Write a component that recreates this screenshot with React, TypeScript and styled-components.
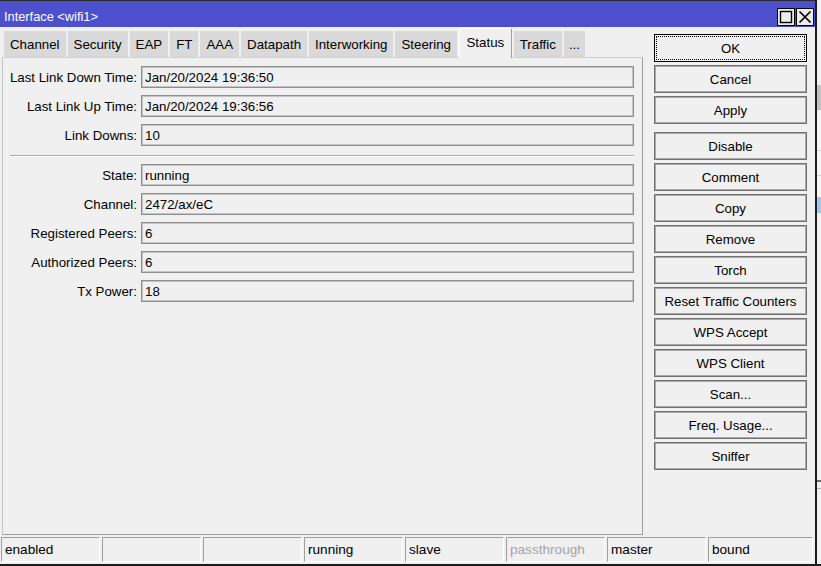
import React from "react";
import styled, { createGlobalStyle } from "styled-components";

const GlobalStyle = createGlobalStyle`
  html, body {
    margin: 0;
    padding: 0;
    background: #f0f0f0;
    overflow: hidden;
  }
  body {
    font-family: "Liberation Sans", Arial, sans-serif;
    font-size: 13.3px;
    color: #000;
  }
  * { box-sizing: border-box; }
`;

const Desktop = styled.div`
  display: flex;
  width: 821px;
  height: 566px;
  overflow: hidden;
`;

const Window = styled.div`
  width: 817px;
  height: 566px;
  flex-shrink: 0;
  display: flex;
  flex-direction: column;
  background: #f0f0f0;
  border-top: 1px solid #2a2a2a;
  border-right: 2px solid #1c1c1c;
  border-bottom: 2px solid #1c1c1c;
`;

const TitleBar = styled.div`
  height: 26px;
  flex-shrink: 0;
  display: flex;
  align-items: center;
  background: #4c50cd;
  color: #fff;
  padding: 0 1px 0 4px;
`;

const TitleText = styled.div`
  flex: 1;
  font-size: 12.8px;
  white-space: nowrap;
  margin-top: 4px;
`;

const TitleButtons = styled.div`
  display: flex;
  gap: 1px;
  align-self: flex-end;
  margin-bottom: 1px;
`;

const TitleButton = styled.div`
  width: 18px;
  height: 18px;
  border: 1px solid #000;
  background: #ececec;
  display: flex;
  align-items: center;
  justify-content: center;
`;

const Body = styled.div`
  flex: 1;
  min-height: 0;
  display: flex;
`;

const LeftCol = styled.div`
  width: 641px;
  margin-left: 2px;
  display: flex;
  flex-direction: column;
`;

const TabRow = styled.div`
  height: 30px;
  flex-shrink: 0;
  display: flex;
  align-items: flex-end;
  gap: 2px;
  padding-left: 2px;
`;

const Tab = styled.div<{ $active?: boolean; $narrow?: boolean }>`
  height: ${(p) => (p.$active ? "30px" : "26px")};
  padding: ${(p) => (p.$narrow ? "0 5px" : p.$active ? "0 6.5px 3px" : "0 6px")};
  display: flex;
  align-items: center;
  white-space: nowrap;
  font-size: 13.3px;
  background: ${(p) => (p.$active ? "#f0f0f0" : "#d9d9d9")};
  border-left: ${(p) => (p.$active ? "1px solid #ffffff" : "none")};
  border-top: ${(p) => (p.$active ? "1px solid #ffffff" : "none")};
  border-right: ${(p) => (p.$active ? "1px solid #a0a0a0" : "none")};
  margin-bottom: ${(p) => (p.$active ? "-1px" : "0")};
  position: relative;
  z-index: ${(p) => (p.$active ? 1 : 0)};
`;

const Panel = styled.div`
  flex: 1;
  min-height: 0;
  background: #f0f0f0;
  border: 1px solid #a0a0a0;
  border-left-color: #c6c6c6;
  border-top-color: #d0d0d0;
  padding: 8px 8px 0 7px;
`;

const FieldGrid = styled.div`
  display: grid;
  grid-template-columns: 127px 1fr;
  column-gap: 4px;
  row-gap: 7px;
`;

const Label = styled.div`
  height: 22px;
  display: flex;
  align-items: center;
  justify-content: flex-end;
  white-space: nowrap;
  font-size: 13.3px;
  color: #000;
`;

const Field = styled.div`
  height: 22px;
  display: flex;
  align-items: center;
  padding-left: 3px;
  border: 1px solid #8e8e8e;
  box-shadow: inset 0 0 0 1px #c4c4c4;
  background: #f0f0f0;
  font-size: 13.3px;
  white-space: nowrap;
`;

const Separator = styled.div`
  grid-column: 1 / span 2;
  margin-top: 2px;
  height: 2px;
  border-top: 1px solid #a8a8a8;
  border-bottom: 1px solid #ffffff;
`;

const RightCol = styled.div`
  width: 153px;
  margin-left: 11px;
  padding-top: 7px;
  display: flex;
  flex-direction: column;
  gap: 3px;
`;

const Button = styled.div<{ $default?: boolean; $groupStart?: boolean }>`
  height: 28px;
  flex-shrink: 0;
  position: relative;
  display: flex;
  align-items: center;
  justify-content: center;
  font-size: 13.3px;
  white-space: nowrap;
  background: #f0f0f0;
  border: 1px solid ${(p) => (p.$default ? "#000" : "#707070")};
  box-shadow: ${(p) => (p.$default ? "none" : "inset 0 0 0 1px #a9a9a9")};
  margin-top: ${(p) => (p.$groupStart ? "5px" : "0")};

  &::after {
    content: "";
    display: ${(p) => (p.$default ? "block" : "none")};
    position: absolute;
    inset: 1px;
    border: 1px dotted #000;
    pointer-events: none;
  }
`;

const StatusBar = styled.div`
  height: 25px;
  flex-shrink: 0;
  margin: 2px 2px 2px 1px;
  display: flex;
  gap: 2px;
`;

const StatusCell = styled.div<{ $dim?: boolean; $last?: boolean }>`
  width: ${(p) => (p.$last ? "auto" : "99px")};
  flex: ${(p) => (p.$last ? "1" : "0 0 auto")};
  height: 25px;
  display: flex;
  align-items: center;
  padding-left: 3px;
  font-size: 13.6px;
  white-space: nowrap;
  color: ${(p) => (p.$dim ? "#a4a4a4" : "#000")};
  border-top: 1px solid #a0a0a0;
  border-left: 1px solid #a0a0a0;
  border-right: 1px solid #ffffff;
  border-bottom: 1px solid #ffffff;
`;

const Strip = styled.div`
  flex: 1;
  display: flex;
  flex-direction: column;
`;

const StripPiece = styled.div<{ $h: number; $c: string }>`
  height: ${(p) => p.$h}px;
  flex-shrink: 0;
  background: ${(p) => p.$c};
`;

const tabs = [
  "Channel",
  "Security",
  "EAP",
  "FT",
  "AAA",
  "Datapath",
  "Interworking",
  "Steering",
  "Status",
  "Traffic",
  "...",
];

const topFields: [string, string][] = [
  ["Last Link Down Time:", "Jan/20/2024 19:36:50"],
  ["Last Link Up Time:", "Jan/20/2024 19:36:56"],
  ["Link Downs:", "10"],
];

const bottomFields: [string, string][] = [
  ["State:", "running"],
  ["Channel:", "2472/ax/eC"],
  ["Registered Peers:", "6"],
  ["Authorized Peers:", "6"],
  ["Tx Power:", "18"],
];

const buttons = [
  "OK",
  "Cancel",
  "Apply",
  "Disable",
  "Comment",
  "Copy",
  "Remove",
  "Torch",
  "Reset Traffic Counters",
  "WPS Accept",
  "WPS Client",
  "Scan...",
  "Freq. Usage...",
  "Sniffer",
];

const statuses: { text: string; dim?: boolean }[] = [
  { text: "enabled" },
  { text: "" },
  { text: "" },
  { text: "running" },
  { text: "slave" },
  { text: "passthrough", dim: true },
  { text: "master" },
  { text: "bound" },
];

const stripPieces: [number, string][] = [
  [85, "#f0f0f0"],
  [25, "#c2c2c2"],
  [40, "#f4f4f4"],
  [1, "#d6d6d6"],
  [24, "#f4f4f4"],
  [1, "#d6d6d6"],
  [21, "#f4f4f4"],
  [16, "#9dc8ee"],
  [267, "#f0f0f0"],
  [2, "#6a6a6a"],
  [6, "#f0f0f0"],
  [1, "#b0b0b0"],
  [75, "#f0f0f0"],
  [2, "#1c1c1c"],
];

export default function App() {
  return (
    <>
      <GlobalStyle />
      <Desktop>
        <Window>
          <TitleBar>
            <TitleText>Interface &lt;wifi1&gt;</TitleText>
            <TitleButtons>
              <TitleButton>
                <svg width="16" height="16" viewBox="0 0 16 16">
                  <rect x="2.5" y="2.5" width="11" height="11" fill="none" stroke="#000" strokeWidth="1.4" />
                </svg>
              </TitleButton>
              <TitleButton>
                <svg width="16" height="16" viewBox="0 0 16 16">
                  <path d="M2.5 2.5 L13.5 13.5 M13.5 2.5 L2.5 13.5" stroke="#000" strokeWidth="1.7" />
                </svg>
              </TitleButton>
            </TitleButtons>
          </TitleBar>
          <Body>
            <LeftCol>
              <TabRow>
                {tabs.map((t) => (
                  <Tab key={t} $active={t === "Status"} $narrow={t === "..."}>
                    {t}
                  </Tab>
                ))}
              </TabRow>
              <Panel>
                <FieldGrid>
                  {topFields.map(([l, v]) => (
                    <React.Fragment key={l}>
                      <Label>{l}</Label>
                      <Field>{v}</Field>
                    </React.Fragment>
                  ))}
                  <Separator />
                  {bottomFields.map(([l, v]) => (
                    <React.Fragment key={l}>
                      <Label>{l}</Label>
                      <Field>{v}</Field>
                    </React.Fragment>
                  ))}
                </FieldGrid>
              </Panel>
            </LeftCol>
            <RightCol>
              {buttons.map((b) => (
                <Button key={b} $default={b === "OK"} $groupStart={b === "Disable"}>
                  {b}
                </Button>
              ))}
            </RightCol>
          </Body>
          <StatusBar>
            {statuses.map((s, i) => (
              <StatusCell key={i} $dim={s.dim} $last={i === statuses.length - 1}>
                {s.text}
              </StatusCell>
            ))}
          </StatusBar>
        </Window>
        <Strip>
          {stripPieces.map(([h, c], i) => (
            <StripPiece key={i} $h={h} $c={c} />
          ))}
        </Strip>
      </Desktop>
    </>
  );
}
